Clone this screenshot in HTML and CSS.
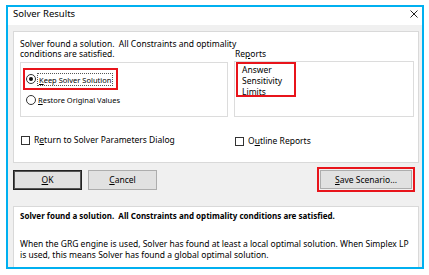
FILE: index.html
```html
<!DOCTYPE html>
<html lang="en-US">
    <head>
        <meta charset="UTF-8">
        <title>Solver Results</title>
        <link rel="stylesheet" href="styles.css">
    </head>
    <body>
        <div class="window">

            <!-- TITLE BAR -->
            <div class="titlebar">
                <span class="title">Solver Results</span>
                <svg class="close" width="8" height="8" viewBox="0 0 8 8">
                    <path d="M0.5 0.5 L7.5 7.5 M7.5 0.5 L0.5 7.5" stroke="#222" stroke-width="1" fill="none"/>
                </svg>
            </div>

            <div class="content">

                <!-- MAIN PANEL -->
                <div class="panel main">
                    <p class="message">Solver found a solution.&nbsp; All Constraints and optimality<br>conditions are satisfied.</p>
                    <div class="reports-label">Re<u>p</u>orts</div>

                    <div class="radiobox">
                        <div class="highlight keep">
                            <span class="radio checked"></span>
                            <span class="focus"><u>K</u>eep Solver Solution</span>
                        </div>
                        <div class="option">
                            <span class="radio"></span>
                            <span class="option-text"><u>R</u>estore Original Values</span>
                        </div>
                    </div>

                    <div class="listbox">
                        <div class="highlight reports">
                            <div>Answer</div>
                            <div>Sensitivity</div>
                            <div>Limits</div>
                        </div>
                    </div>

                    <div class="check">
                        <span class="box"></span>
                        <span>R<u>e</u>turn to Solver Parameters Dialog</span>
                    </div>
                    <div class="check outline">
                        <span class="box"></span>
                        <span>O<u>u</u>tline Reports</span>
                    </div>
                </div>

                <!-- BUTTONS -->
                <div class="buttons">
                    <div class="btn default"><u>O</u>K</div>
                    <div class="btn"><u>C</u>ancel</div>
                    <div class="highlight save">
                        <div class="btn wide"><u>S</u>ave Scenario...</div>
                    </div>
                </div>

                <!-- INFO PANEL -->
                <div class="panel info">
                    <p class="info-title">Solver found a solution.&nbsp; All Constraints and optimality conditions are satisfied.</p>
                    <p class="info-text">When the GRG engine is used, Solver has found at least a local optimal solution. When Simplex LP is used, this means Solver has found a global optimal solution.</p>
                </div>

            </div>
        </div>
    </body>
</html>
```

FILE: styles.css
```css
* {
    margin: 0;
    padding: 0;
    box-sizing: border-box;
}
body {
    background: #FFF;
    color: #000;
    font: 8.5px/10px "Noto Sans", sans-serif;
}
u {
    text-decoration: underline;
    text-underline-offset: 1px;
}
.window {
    margin: 5px 0 0 6px;
    width: 418px;
    height: 264px;
    border: 2px solid #00B0F0;
    background: #F0F0F0;
    display: flex;
    flex-direction: column;
}

/* title bar */
.titlebar {
    height: 18px;
    background: #FFF;
    display: flex;
    justify-content: space-between;
    align-items: flex-start;
    padding: 2px 4px 0 5px;
}
.title {
    font-size: 9.5px;
    line-height: 10px;
}
.close {
    margin-top: 1px;
}

.content {
    flex: 1;
    padding: 6px 3px 0 5px;
    display: flex;
    flex-direction: column;
}
.panel {
    background: #FFF;
    border: 1px solid #D9D9D9;
}

/* main panel */
.main {
    height: 132px;
    padding: 7px 6px 0;
    display: grid;
    grid-template-columns: 208px 180px;
    grid-template-rows: 22px 56px auto;
    column-gap: 6px;
    white-space: nowrap;
}
.message {
    grid-column: 1 / 3;
    grid-row: 1;
}
.reports-label {
    grid-column: 2;
    grid-row: 1;
    align-self: end;
    margin: 0 0 2px 1px;
}
.highlight {
    border: 2px solid #E8141B;
}
.radiobox {
    grid-column: 1;
    grid-row: 2;
    margin-top: 1px;
    border: 1px solid #DCDCDC;
    font-size: 7.5px;
}
.keep {
    margin: 5px 0 0 2px;
    width: 95px;
    height: 22px;
    display: flex;
    align-items: center;
    padding-left: 1px;
}
.radio {
    width: 10px;
    height: 10px;
    border: 1px solid #333;
    border-radius: 50%;
    background: #FFF;
    display: flex;
    align-items: center;
    justify-content: center;
    flex-shrink: 0;
}
.radio.checked::after {
    content: "";
    width: 4px;
    height: 4px;
    border-radius: 50%;
    background: #111;
}
.focus {
    margin-left: 1px;
    border: 1px dotted #555;
    padding: 1px 1px 0;
    line-height: 10px;
    flex-shrink: 0;
}
.option {
    display: flex;
    align-items: center;
    margin-top: 5px;
    padding-left: 5px;
}
.option-text {
    margin-left: 2px;
}
.listbox {
    grid-column: 2;
    grid-row: 2;
    border: 1px solid #DCDCDC;
}
.reports {
    margin: 0 0 0 1px;
    width: 60px;
    height: 35px;
    padding: 0 0 0 4px;
    line-height: 11px;
}
.check {
    grid-row: 3;
    display: flex;
    align-items: center;
    margin: 18px 0 0 1px;
    height: 10px;
}
.check.outline {
    grid-column: 2;
    margin-top: 19px;
}
.box {
    width: 9px;
    height: 9px;
    border: 1px solid #333;
    background: #FFF;
    margin-right: 4px;
}

/* buttons */
.buttons {
    display: flex;
    align-items: center;
    gap: 6px;
    margin-top: 4px;
    height: 25px;
    white-space: nowrap;
}
.btn {
    width: 69px;
    height: 20px;
    border: 1px solid #ADADAD;
    background: #E1E1E1;
    display: flex;
    align-items: center;
    justify-content: center;
}
.btn.default {
    border-color: #222;
    box-shadow: inset 0 0 0 1px #555;
}
.save {
    margin-left: auto;
    margin-right: 4px;
    width: 98px;
    height: 25px;
    padding: 1px;
}
.btn.wide {
    width: 92px;
    height: 19px;
}

/* info panel */
.info {
    flex: 1;
    margin-top: 14px;
    padding: 3px 6px 0;
    border-bottom: 0;
}
.info-title {
    font-weight: bold;
    font-size: 8px;
    line-height: 11px;
    white-space: nowrap;
}
.info-text {
    margin-top: 17px;
    line-height: 11px;
}
```
